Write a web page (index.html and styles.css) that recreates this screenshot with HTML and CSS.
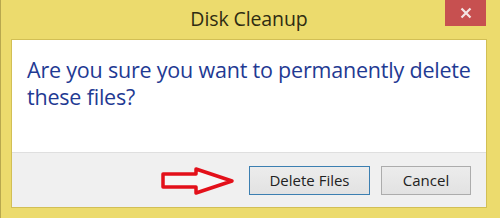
FILE: index.html
```html
<!DOCTYPE html>
<html>
<head>
<meta charset="utf-8">
<link rel="stylesheet" href="styles.css">
</head>
<body>
<div class="window">
  <div class="titlebar">
    <div class="spacer"></div>
    <div class="title">Disk Cleanup</div>
    <div class="controls">
      <div class="close">
        <svg width="12" height="12" viewBox="0 0 12 12"><path d="M1.5 1.5 L10.5 10.5 M10.5 1.5 L1.5 10.5" stroke="#f4e4e4" stroke-width="2.2" fill="none"/></svg>
      </div>
    </div>
  </div>
  <div class="client">
    <div class="content">
      <p class="instruction">Are you sure you want to permanently delete these files?</p>
    </div>
    <div class="footer">
      <svg class="arrow" width="76" height="32" viewBox="0 0 76 32">
        <path d="M3 8 H36 V3 L72 15 L36 27 V21 H3 Z" fill="#f6f6f6" stroke="#e3101a" stroke-width="3.5" stroke-linejoin="round"/>
      </svg>
      <button class="btn primary">Delete Files</button>
      <button class="btn">Cancel</button>
    </div>
  </div>
</div>
</body>
</html>
```
FILE: styles.css
```css
html, body {
  margin: 0;
  padding: 0;
  background: #e9d76a;
}
.window {
  width: 500px;
  height: 218px;
  box-sizing: border-box;
  background: #ecdb6d;
  border-left: 1px solid #b8a84e;
  padding: 0 13px 10px 10px;
  display: flex;
  flex-direction: column;
  font-family: "Open Sans", "Noto Sans", sans-serif;
}
.titlebar {
  height: 39px;
  display: grid;
  grid-template-columns: 1fr auto 1fr;
}
.title {
  font-size: 19.5px;
  color: #2f2c12;
  padding-top: 6px;
  line-height: 26px;
  letter-spacing: -0.1px;
}
.controls {
  display: flex;
  justify-content: flex-end;
  align-items: flex-start;
}
.close {
  width: 41px;
  height: 26px;
  background: #c75050;
  display: flex;
  align-items: center;
  justify-content: center;
  margin-right: 1px;
}
.client {
  flex: 1;
  border: 1px solid #d2bf55;
  display: flex;
  flex-direction: column;
}
.content {
  background: #ffffff;
  height: 112px;
  padding: 0 15px;
}
.instruction {
  margin: 0;
  padding-top: 16px;
  font-size: 21.5px;
  line-height: 27px;
  color: #1f3a93;
  letter-spacing: -0.2px;
}
.footer {
  flex: 1;
  background: #f0f0f0;
  border-top: 1px solid #dfdfdf;
  display: flex;
  justify-content: flex-end;
  align-items: center;
  padding-right: 15px;
}
.arrow {
  margin-right: 13px;
  margin-top: 4px;
}
.btn {
  height: 29px;
  box-sizing: border-box;
  font-family: "Open Sans", "Noto Sans", sans-serif;
  font-size: 15px;
  color: #222;
  background: linear-gradient(#ececec, #e2e2e2);
  border: 1px solid #acacac;
  padding: 0;
  width: 90px;
  margin-left: 11px;
}
.btn.primary {
  width: 121px;
  border-color: #3c7fb1;
  margin-left: 0;
}
```
